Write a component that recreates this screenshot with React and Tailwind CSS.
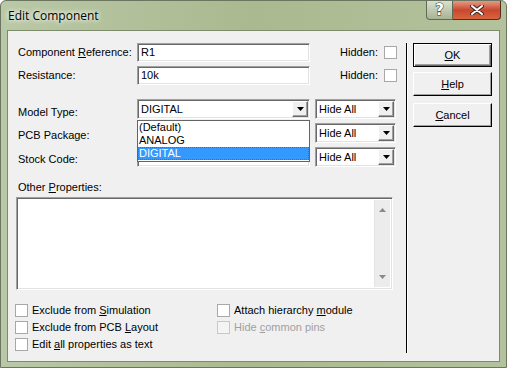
import React from "react";

const font = { fontFamily: '"Liberation Sans", Arial, sans-serif' };

// sunken classic edit box
const sunken =
  "bg-white border-t border-l border-[#a0a0a0] border-b border-r border-b-white border-r-white shadow-[inset_1px_1px_0_#696969,inset_-1px_-1px_0_#e3e3e3]";

const Arrow = () => (
  <div className="w-[16px] h-[16px] bg-[#f0f0f0] border border-t-white border-l-white border-b-[#696969] border-r-[#696969] shadow-[inset_-1px_-1px_0_#a0a0a0] flex items-center justify-center">
    <svg width="7" height="4" viewBox="0 0 7 4">
      <path d="M0 0h7L3.5 4z" fill="#000" />
    </svg>
  </div>
);

const Combo = ({ value, className = "", children }) => (
  <div className={`relative h-[20px] ${className}`}>
    <div className={`h-full ${sunken} flex items-center justify-between pl-[3px] pr-[1px]`}>
      <span className="text-[11px] text-black leading-none">{value}</span>
      <Arrow />
    </div>
    {children}
  </div>
);

const Check = ({ disabled }) => (
  <div
    className={`w-[13px] h-[13px] border ${
      disabled ? "border-[#c8c8c8] bg-[#f4f4f4]" : "border-[#a8a8a8] bg-white"
    }`}
  />
);

const Button = ({ children, isDefault }) => (
  <div
    className={`h-[24px] w-[79px] flex items-center justify-center text-[11px] text-black ${
      isDefault
        ? "border border-black shadow-[inset_1px_1px_0_#fff,inset_-1px_-1px_0_#696969,inset_-2px_-2px_0_#a0a0a0]"
        : "border border-t-white border-l-white border-b-black border-r-black shadow-[inset_-1px_-1px_0_#a0a0a0]"
    } bg-[#f0f0f0]`}
  >
    {children}
  </div>
);

export default function App() {
  return (
    <div
      className="w-[507px] h-[368px] flex flex-col rounded-t-[6px] border border-[#6b7560] bg-gradient-to-r from-[#b9c8a6] via-[#aab98f] to-[#b2c29c] overflow-hidden"
      style={font}
    >
      {/* title bar */}
      <div className="h-[29px] flex items-start shrink-0">
        <div
          className="pl-[7px] pt-[6px] text-[12px] text-black"
          style={{ fontFamily: '"Open Sans", "Noto Sans", sans-serif', textShadow: "0 0 6px #fff, 0 0 4px #fff" }}
        >
          Edit Component
        </div>
        <div className="ml-auto mr-[5px] flex">
          <div className="w-[27px] h-[19px] rounded-bl-[4px] border border-t-0 border-[#5f6b55] bg-gradient-to-b from-[#d9e0cf] to-[#a8b394] flex items-center justify-center">
            <span
              className="text-[15px] font-bold text-white leading-none"
              style={{ fontFamily: '"DejaVu Sans", sans-serif', WebkitTextStroke: "1px #2f3529", paintOrder: "stroke fill" }}
            >
              ?
            </span>
          </div>
          <div className="w-[48px] h-[19px] rounded-br-[4px] border border-l-0 border-t-0 border-[#5a2a1e] bg-gradient-to-b from-[#e29a87] via-[#c9472e] to-[#d8643f] flex items-center justify-center">
            <svg width="14" height="10" viewBox="0 0 14 10">
              <path d="M2 1l10 8M12 1L2 9" stroke="#3b2a22" strokeWidth="4" strokeLinecap="round" />
              <path d="M2 1l10 8M12 1L2 9" stroke="#fff" strokeWidth="2" strokeLinecap="round" />
            </svg>
          </div>
        </div>
      </div>

      {/* client area */}
      <div className="flex-1 mx-[6px] mb-[5px] bg-[#f0f0f0] border border-[#7d8a6c] flex">
        {/* left section */}
        <div className="w-[398px] flex flex-col pt-[12px] pl-[8px] text-[11px] text-black">
          <div className="flex flex-col gap-[4px]">
            <div className="h-[19px] flex items-center">
              <span className="w-[121px] pl-[2px]">
                Component <u>R</u>eference:
              </span>
              <div className={`w-[173px] h-[19px] ${sunken} pl-[3px] flex items-center`}>R1</div>
              <span className="ml-auto mr-[6px]">Hidden:</span>
              <div className="mr-[9px]"><Check /></div>
            </div>
            <div className="h-[19px] flex items-center">
              <span className="w-[121px] pl-[2px]">Resistance:</span>
              <div className={`w-[173px] h-[19px] ${sunken} pl-[3px] flex items-center`}>10k</div>
              <span className="ml-auto mr-[6px]">Hidden:</span>
              <div className="mr-[9px]"><Check /></div>
            </div>
          </div>

          <div className="flex flex-col gap-[4px] mt-[14px]">
            <div className="h-[20px] flex items-center relative z-10">
              <span className="w-[121px] pl-[2px] pt-[6px]">Model Type:</span>
              <Combo value="DIGITAL" className="w-[173px]">
                <div className="absolute left-0 top-[21px] w-full bg-white border border-[#646464] z-20 pb-[1px]">
                  <div className="h-[13px] leading-[13px] pl-[1px]">(Default)</div>
                  <div className="h-[13px] leading-[13px] pl-[1px]">ANALOG</div>
                  <div className="h-[13px] leading-[13px] pl-[1px] bg-[#3399ff] text-white outline-1 outline-dotted outline-[#a05a1e] -outline-offset-1">
                    DIGITAL
                  </div>
                </div>
              </Combo>
              <Combo value="Hide All" className="w-[81px] ml-[5px]" />
            </div>
            <div className="h-[20px] flex items-center">
              <span className="w-[121px] pl-[2px] pt-[5px]">PCB Package:</span>
              <div className={`w-[173px] h-[20px] ${sunken}`} />
              <Combo value="Hide All" className="w-[81px] ml-[5px]" />
            </div>
            <div className="h-[20px] flex items-center">
              <span className="w-[121px] pl-[2px] pt-[4px]">Stock Code:</span>
              <div className={`w-[173px] h-[20px] ${sunken}`} />
              <Combo value="Hide All" className="w-[81px] ml-[5px]" />
            </div>
          </div>

          <div className="mt-[14px] h-[13px] leading-[13px] pl-[2px]">
            Other <u>P</u>roperties:
          </div>
          <div className={`mt-[3px] w-[377px] h-[93px] ${sunken} flex justify-end p-[2px]`}>
            <div className="w-[16px] h-full bg-[#ececec] border-l border-[#e4e4e4] flex flex-col items-center justify-between py-[8px]">
              <svg width="7" height="4" viewBox="0 0 7 4">
                <path d="M0 4h7L3.5 0z" fill="#8a8a8a" />
              </svg>
              <svg width="7" height="4" viewBox="0 0 7 4">
                <path d="M0 0h7L3.5 4z" fill="#8a8a8a" />
              </svg>
            </div>
          </div>

          <div className="mt-[14px] flex -ml-[1px]">
            <div className="w-[202px] flex flex-col gap-[4px]">
              <div className="h-[13px] flex items-center gap-[4px]">
                <Check />
                <span>Exclude from <u>S</u>imulation</span>
              </div>
              <div className="h-[13px] flex items-center gap-[4px]">
                <Check />
                <span>Exclude from PCB <u>L</u>ayout</span>
              </div>
              <div className="h-[13px] flex items-center gap-[4px]">
                <Check />
                <span>Edit <u>a</u>ll properties as text</span>
              </div>
            </div>
            <div className="flex flex-col gap-[4px]">
              <div className="h-[13px] flex items-center gap-[4px]">
                <Check />
                <span>Attach hierarchy <u>m</u>odule</span>
              </div>
              <div className="h-[13px] flex items-center gap-[4px] text-[#a0a0a0]">
                <Check disabled />
                <span>Hide <u>c</u>ommon pins</span>
              </div>
            </div>
          </div>
        </div>

        {/* separator */}
        <div className="w-[1px] bg-black mt-[12px] mb-[8px] shadow-[1px_0_0_#fff]" />

        {/* buttons */}
        <div className="flex flex-col pt-[12px] pl-[6px]">
          <Button isDefault>
            <span><u>O</u>K</span>
          </Button>
          <div className="mt-[5px]">
            <Button>
              <span><u>H</u>elp</span>
            </Button>
          </div>
          <div className="mt-[7px]">
            <Button>
              <span><u>C</u>ancel</span>
            </Button>
          </div>
        </div>
      </div>
    </div>
  );
}
